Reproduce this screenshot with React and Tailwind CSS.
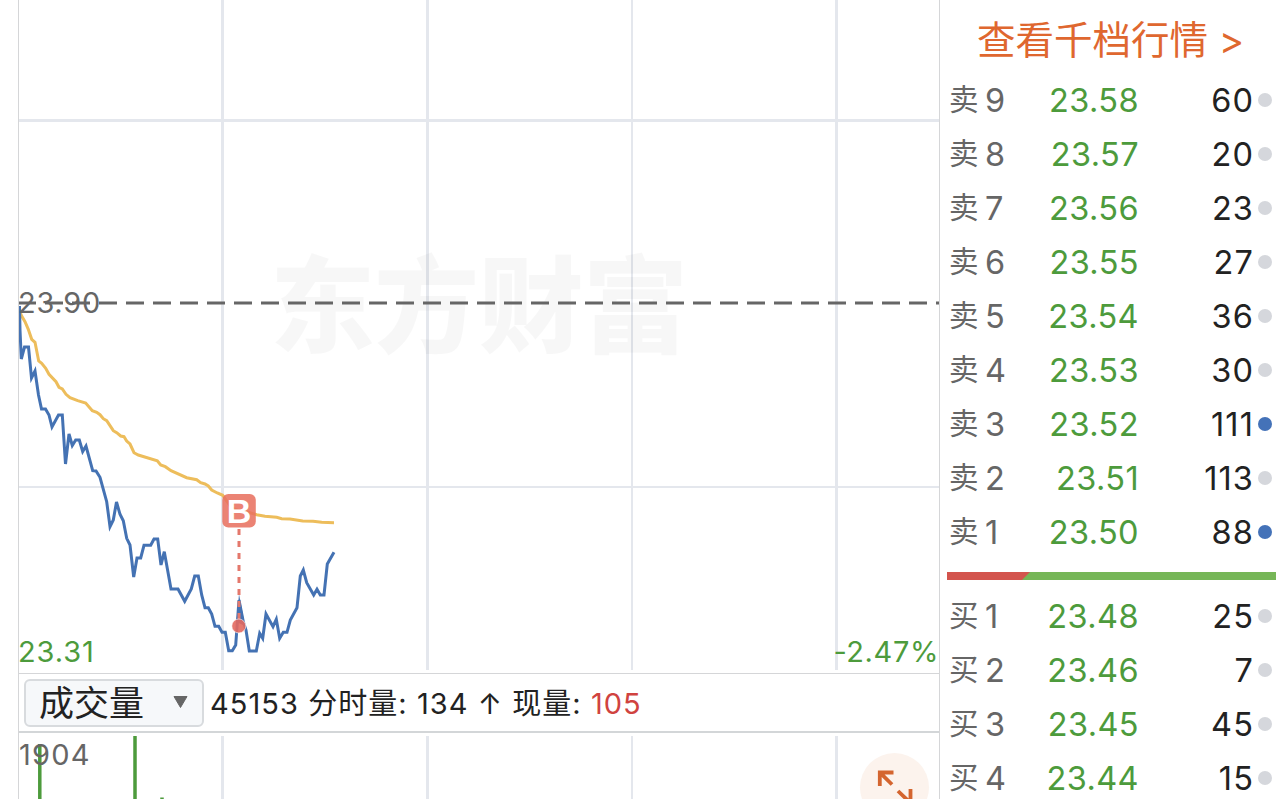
const ASKS = [
  { level: 9, price: "23.58", volume: "60" },
  { level: 8, price: "23.57", volume: "20" },
  { level: 7, price: "23.56", volume: "23" },
  { level: 6, price: "23.55", volume: "27" },
  { level: 5, price: "23.54", volume: "36" },
  { level: 4, price: "23.53", volume: "30" },
  { level: 3, price: "23.52", volume: "111", active: true },
  { level: 2, price: "23.51", volume: "113" },
  { level: 1, price: "23.50", volume: "88", active: true },
];

const BIDS = [
  { level: 1, price: "23.48", volume: "25" },
  { level: 2, price: "23.46", volume: "7" },
  { level: 3, price: "23.45", volume: "45" },
  { level: 4, price: "23.44", volume: "15" },
];

const PRICE_LINE =
  "19.5,306 20,330 21.3,359 24.5,347 28.5,347 31.5,378 35,371 38.5,395 41.5,409 45.5,409 49,415 52,427 58.5,415 62.3,415 65.5,464 69,434 72.3,445.5 75.7,440 79.3,440 82.7,451.5 86,446 92.7,470.7 96,471 100,477.3 106.7,501.7 110,526.7 113.3,520 116.5,502 120,514.3 123.3,520.7 126.7,538.3 130,545 133.7,577 137,558 140.7,558 144,545.3 150.7,545.3 154,539 157.7,539 161,565 164.3,551.7 171,589 178,589 184.7,601.3 191.3,589 194.7,576 198.3,576 201.7,595 205,607.7 208.3,607.7 211.7,614 215,626.3 218.7,626.3 222,632.3 225.3,632.3 228.7,650.7 232.3,650.7 235.7,645 239,600 243.3,621.7 246,630 249.3,651 256.3,651 259.7,633.3 262.7,638.3 266,614 273,626.7 276.3,619.3 279.7,638.3 283.3,632.3 287,632.3 290.3,620 297,607.7 300.3,576 303.3,570 306.7,582.7 313.7,595 317,589.3 320.3,595 324,595 327.3,564 334,552.3";

const AVERAGE_LINE =
  "20,312 21.7,316 25,321.7 28.3,329.3 31.7,339.3 35,342.3 38.7,361 41.7,363.3 45.7,368.3 49,374.3 56,381.7 59,387.3 62.3,389 66,394.3 70,397.7 77.7,400.7 85.7,403 92.3,410.7 96.7,412.3 100,414.7 103.3,418.7 106.7,420.7 113.3,430.7 116.7,432.7 120.7,436 124,436.7 126.7,441 130,444 134,452.7 138.3,455 157.3,460.7 160.7,465 165.3,466.7 171,470.7 186.7,477.7 196.7,479.7 200.7,482.7 205,484 208.3,486 211.7,490 217.3,493 222.7,495.3 231.7,508 240,511 246.7,511.7 256.7,514.7 265,516.3 276.7,517.3 281.7,518.7 290,519 302.7,521 313,521.3 321.7,522.3 334,522.7";

function OrderRow({ side, level, price, volume, active }) {
  return (
    <div className="flex h-[54px] items-center pl-[9px] pr-[12px] text-[32.5px] leading-none">
      <span className="w-[36px] text-[29.5px] text-[#666]">{side}</span>
      <span className="w-[40px] pt-[2px] text-[#666]">{level}</span>
      <span className="w-[114px] pt-[2px] text-right tracking-[0.4px] text-[#4d9b3c]">{price}</span>
      <span className="flex-1 pt-[2px] text-right tracking-[1.1px] text-[#222]">{volume}</span>
      <span className={`ml-[4px] size-[14px] rounded-full ${active ? "bg-[#4472b8]" : "bg-[#d5d7dc]"}`} />
    </div>
  );
}

function PriceChart() {
  return (
    <section className="relative h-[674px] border-b border-[#d5d6d8]">
      <svg className="block h-[673px] w-[920px]" viewBox="19 0 920 673">
        <g stroke="#e4e7ed">
          <path d="M19 120.5H939" strokeWidth="3" />
          <path d="M19 487H939" strokeWidth="2" />
          <path d="M222.5 0V670M427.5 0V670M836.5 0V670" strokeWidth="3" />
          <path d="M632 0V670" strokeWidth="2" />
        </g>
        <text
          x="270"
          y="344"
          textLength="418"
          className="fill-black/[0.03] font-['Noto_Sans_CJK_SC',sans-serif] text-[105px] font-black"
        >
          东方财富
        </text>
        <path d="M18 303H939" stroke="#666" strokeWidth="3" strokeDasharray="18 9" />
        <polyline points={AVERAGE_LINE} fill="none" stroke="#edbd5b" strokeWidth="3" />
        <polyline points={PRICE_LINE} fill="none" stroke="#4472b3" strokeWidth="3" />
        <path d="M236.5 622L239 594L245 626Z" fill="#4472b3" />
        {/* buy marker */}
        <path d="M239 529V620" stroke="#e4786c" strokeWidth="3" strokeDasharray="6 6" />
        <circle cx="238.8" cy="626" r="7" fill="#e3695f" fillOpacity="0.9" stroke="#fff" strokeOpacity="0.6" />
        <rect x="222.3" y="494" width="33.5" height="33.5" rx="6" fill="#e8705f" fillOpacity="0.87" />
        <text
          x="239"
          y="523"
          textAnchor="middle"
          className="fill-white font-['Liberation_Sans',sans-serif] text-[34px] font-bold"
        >
          B
        </text>
      </svg>
      <span className="absolute -left-px top-[288px] text-[29px] leading-[30px] tracking-[0.7px] text-[#666]">23.90</span>
      <span className="absolute -left-px top-[637px] text-[29px] leading-[30px] tracking-[0.9px] text-[#4d9b3c]">
        23.31
      </span>
      <span className="absolute right-0 top-[637px] text-[29px] leading-[30px] tracking-[0.6px] text-[#4d9b3c]">
        -2.47%
      </span>
    </section>
  );
}

function IndicatorBar() {
  return (
    <div className="flex h-[59px] items-center border-b-2 border-[#d3d6d8] pl-[5px] text-[29px] text-[#222]">
      <button className="flex h-[48px] w-[180px] items-center justify-between rounded-[6px] border-2 border-[#d8dbde] bg-[#f6f8fa] pl-[13px] pr-[14px] pt-[2px] text-[35px] leading-none">
        成交量
        <svg className="mb-[4px] h-[12px] w-[15px]" viewBox="0 0 15 12">
          <path d="M1 .5H14L7.5 11.5Z" fill="#666" stroke="#666" strokeLinejoin="round" />
        </svg>
      </button>
      <p className="ml-[6px] whitespace-pre pt-[2px] leading-none tracking-[1.05px]">
        45153 分时量: 134 ↑ 现量: <span className="text-[#d0433f]">105</span>
      </p>
    </div>
  );
}

function VolumeChart() {
  return (
    <section className="relative h-[66px] overflow-hidden">
      <svg className="block h-[66px] w-[920px]" viewBox="19 733 920 66">
        <path d="M222.5 736V799M427.5 736V799M836.5 736V799" stroke="#e4e7ed" strokeWidth="3" />
        <path d="M632 736V799" stroke="#e4e7ed" strokeWidth="2" />
        <path d="M39.8 744V799M135 736V799M162 797.5V799" stroke="#4d9b3c" strokeWidth="3.5" />
      </svg>
      <span className="absolute left-0 top-[7px] text-[29px] leading-[30px] tracking-[1.2px] text-[#666]">1904</span>
      <button className="absolute left-[841px] top-[20px] size-[69px] rounded-full bg-[#fcf3ed]">
        <svg className="size-[69px]" viewBox="860 753 69 69" fill="none" stroke="#d4652f" strokeWidth="3.8">
          <path d="M893.5 772.5H879.8V786M880 772.7L892 784.5" />
          <path d="M898 791L910 802.5M910.5 789V804H897" />
        </svg>
      </button>
    </section>
  );
}

export default function App() {
  return (
    <main className="flex h-[799px] w-[1284px] overflow-hidden bg-white pl-[18px] font-['Inter','Noto_Sans_CJK_SC',sans-serif]">
      <div className="w-[922px] border-x border-[#d5d6d8]">
        <PriceChart />
        <IndicatorBar />
        <VolumeChart />
      </div>
      <aside className="w-[344px]">
        <a className="flex h-[73px] items-center whitespace-pre pl-[37px] pt-[8px] text-[38.5px] leading-none text-[#df672f]">
          查看千档行情 &gt;
        </a>
        {ASKS.map((row) => (
          <OrderRow key={row.level} side="卖" {...row} />
        ))}
        <div className="mb-[9px] ml-[7px] mr-[8px] mt-[13px] flex h-[8px] bg-[#76b657]">
          <div className="w-[83px] bg-[#d3544d] [clip-path:polygon(0_0,100%_0,calc(100%-8px)_100%,0_100%)]" />
        </div>
        {BIDS.map((row) => (
          <OrderRow key={row.level} side="买" {...row} />
        ))}
      </aside>
    </main>
  );
}
